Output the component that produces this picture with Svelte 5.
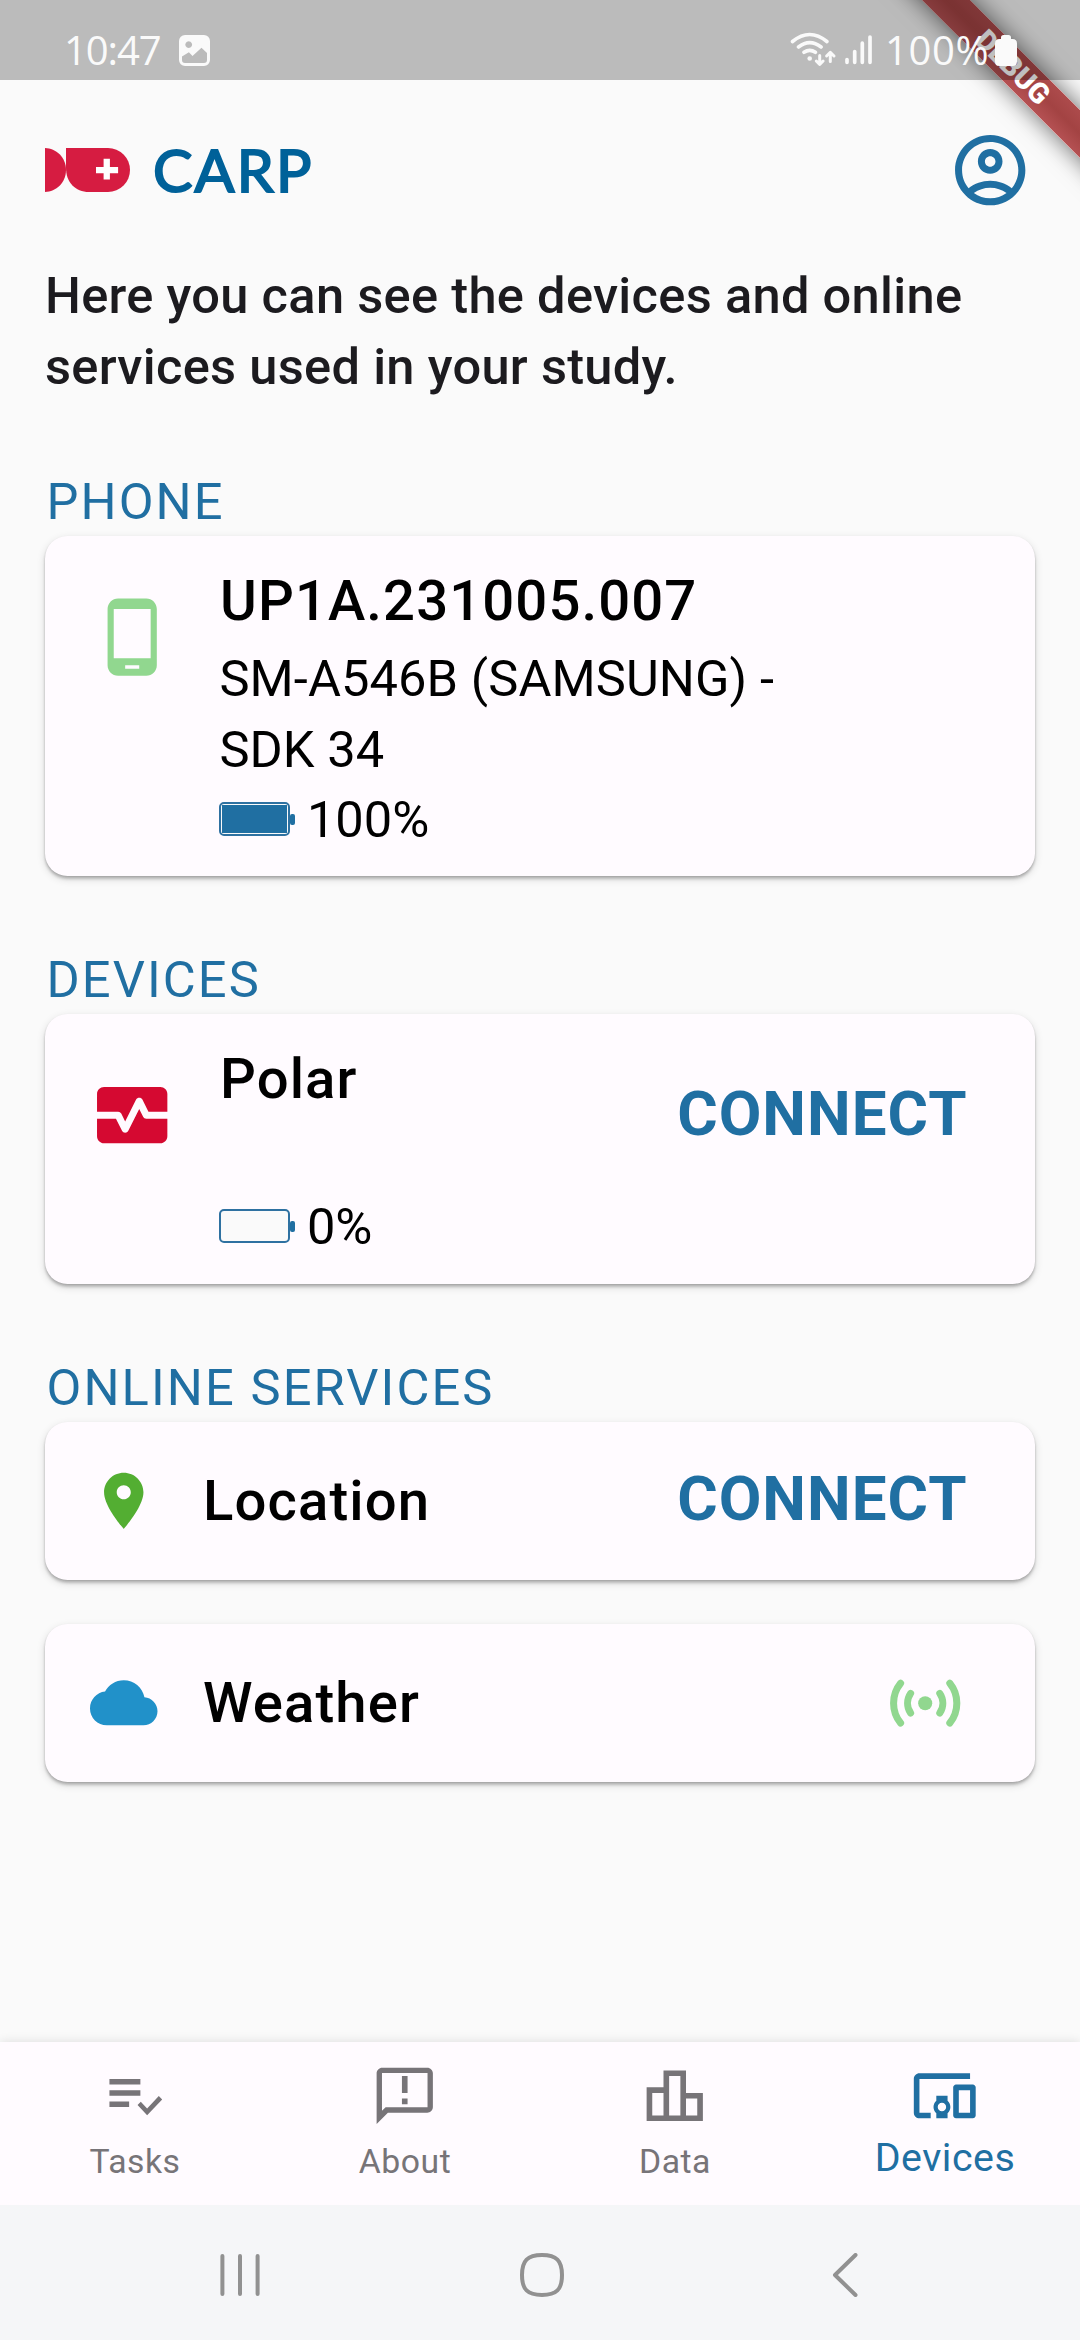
<script>
  const paths = {
    account:
      'M12 2C6.48 2 2 6.48 2 12s4.48 10 10 10 10-4.48 10-10S17.52 2 12 2zM7.35 18.5C8.66 17.56 10.26 17 12 17s3.34.56 4.65 1.5C15.34 19.44 13.74 20 12 20s-3.34-.56-4.65-1.5zm10.79-1.38C16.45 15.8 14.32 15 12 15s-4.45.8-6.14 2.12C4.7 15.73 4 13.95 4 12c0-4.42 3.58-8 8-8s8 3.58 8 8c0 1.95-.7 3.73-1.86 5.12zM12 6c-1.93 0-3.5 1.57-3.5 3.5S10.07 13 12 13s3.5-1.57 3.5-3.5S13.93 6 12 6zm0 5c-.83 0-1.5-.67-1.5-1.5S11.17 8 12 8s1.5.67 1.5 1.5S12.83 11 12 11z',
    phone:
      'M16 1H8C6.34 1 5 2.34 5 4v16c0 1.66 1.34 3 3 3h8c1.66 0 3-1.34 3-3V4c0-1.66-1.34-3-3-3zm-2 20h-4v-1h4v1zm3.25-3H6.75V4h10.5v14z',
    heart:
      'M15.11 12.45L14 10.24l-3.11 6.21c-.16.34-.51.55-.89.55s-.73-.21-.89-.55L7.38 13H2v5c0 1.1.9 2 2 2h16c1.1 0 2-.9 2-2v-5h-6c-.38 0-.73-.21-.89-.55zM20 4H4c-1.1 0-2 .9-2 2v5h6c.38 0 .73.21.89.55L10 13.76l3.11-6.21c.34-.68 1.45-.68 1.79 0L16.62 11H22V6c0-1.1-.9-2-2-2z',
    pin:
      'M12 2C8.13 2 5 5.13 5 9c0 5.25 7 13 7 13s7-7.75 7-13c0-3.87-3.13-7-7-7zm0 9.5c-1.38 0-2.5-1.12-2.5-2.5s1.12-2.5 2.5-2.5 2.5 1.12 2.5 2.5-1.12 2.5-2.5 2.5z',
    cloud:
      'M19.35 10.04C18.67 6.59 15.64 4 12 4 9.11 4 6.6 5.64 5.35 8.04 2.34 8.36 0 10.91 0 14c0 3.31 2.69 6 6 6h13c2.76 0 5-2.24 5-5 0-2.64-2.05-4.78-4.65-4.96z',
    tasks:
      'M14 10H3v2h11v-2zm0-4H3v2h11V6zM3 16h7v-2H3v2zM20.55 12.05l1.2 1.3-5.35 5.55-3.4-3.6 1.15-1.2 2.25 2.4z',
    about:
      'M20 2H4c-1.1 0-2 .9-2 2v18l4-4h14c1.1 0 2-.9 2-2V4c0-1.1-.9-2-2-2zm.1 14.1H5.2L3.9 17.3V3.9h16.2v12.2zM11 13h2v2h-2zm0-8h2v6h-2z',
    data: 'M16 11V3H8v6H2v12h20V11h-6zm-6-6h4v14h-4V5zm-6 6h4v8H4v-8zm16 8h-4v-6h4v6z',
    devices:
      'M3 6h18V4H3c-1.1 0-2 .9-2 2v12c0 1.1.9 2 2 2h4v-2H3V6zm10 6H9v1.78c-.61.55-1 1.33-1 2.22s.39 1.67 1 2.22V20h4v-1.78c.61-.55 1-1.34 1-2.22s-.39-1.67-1-2.22V12zm-2 5.5c-.83 0-1.5-.67-1.5-1.5s.67-1.5 1.5-1.5 1.5.67 1.5 1.5-.67 1.5-1.5 1.5zM22 8h-6c-.5 0-1 .5-1 1v10c0 .5.5 1 1 1h6c.5 0 1-.5 1-1V9c0-.5-.5-1-1-1zm-1 10h-4v-8h4v8z'
  };

  const hardware = [
    {
      heading: 'PHONE',
      icon: 'phone',
      tone: 'green',
      name: 'UP1A.231005.007',
      detail: 'SM-A546B (SAMSUNG) - SDK 34',
      battery: 100,
      connect: false
    },
    { heading: 'DEVICES', icon: 'heart', tone: 'red', name: 'Polar', detail: '', battery: 0, connect: true }
  ];

  const services = [
    { icon: 'pin', tone: 'leaf', name: 'Location', connected: false },
    { icon: 'cloud', tone: 'sky', name: 'Weather', connected: true }
  ];

  const tabs = [
    { icon: 'tasks', label: 'Tasks' },
    { icon: 'about', label: 'About' },
    { icon: 'data', label: 'Data' },
    { icon: 'devices', label: 'Devices', active: true }
  ];
</script>

{#snippet icon(name, cls)}
  <svg class="icon {cls}" viewBox="0 0 24 24" aria-hidden="true"><path fill-rule="evenodd" d={paths[name]} /></svg>
{/snippet}

<div class="screen">
  <div class="ribbon"><span>DEBUG</span></div>

  <div class="status">
    <span class="clock">10:47</span>
    <svg class="picture" viewBox="0 0 31 31" aria-hidden="true">
      <path
        fill="#fafafa"
        fill-rule="evenodd"
        d="M6 0h19a6 6 0 0 1 6 6v19a6 6 0 0 1-6 6H6a6 6 0 0 1-6-6V6a6 6 0 0 1 6-6zM9.7 6.2a3.4 3.4 0 1 0 .01 0zM3 21.5V25q0 3 3 3h19q3 0 3-3v-7l-5.5-5.3-9 8.3-3.6-3.8z"
      />
    </svg>
    <svg class="wifi" viewBox="790 30 84 40" aria-hidden="true">
      <g fill="none" stroke="#fafafa" stroke-width="3.6" stroke-linecap="round" stroke-linejoin="round">
        <path d="M792.5 41.5q17.2-14 34.4 0M798.5 47q11.2-8.6 22.6 0M804 52.3q5.7-4 11.4 0" />
        <path stroke-width="3" d="M819.7 55.5v8.7M816.3 61l3.4 3.500 3.400-3.500M830.300 61.500v-8.700M826.600 56l3.700-3.600 3.700 3.600" />
        <path stroke-width="3.7" d="M847 59.600v2.700M854.700 51.500v10.800M862.300 43.200v19.100M870 37v25.300" />
      </g>
      <circle cx="809.7" cy="58.5" r="2.3" fill="#fafafa" />
    </svg>
    <span class="charge">100%</span>
    <svg class="cell" viewBox="0 0 22 31" aria-hidden="true">
      <path fill="#fafafa" d="M6 4V2.500Q6 0 8.500 0h5Q16 0 16 2.500V4h1.500Q22 4 22 8.500v18Q22 31 17.500 31h-13Q0 31 0 26.500v-18Q0 4 4.500 4z" />
    </svg>
  </div>

  <header>
    <svg class="mark" viewBox="0 0 85 44" aria-hidden="true">
      <path fill="#d61c41" d="M0 0C11 .5 21 9 21 22S11 43.5 0 44z" />
      <path fill="#d61c41" d="M21 0h42a22 22 0 0 1 0 44H44C30 44 21 34 21 20z" />
      <path fill="#fff" d="M58.6 10.7h6.300V19h8.200v6.200h-8.200v6.200h-6.300v-6.200h-7.600V19h7.600z" />
    </svg>
    <span class="brand">CARP</span>
    {@render icon('account', 'large blue end')}
  </header>

  <main>
    <p class="intro">Here you can see the devices and online services used in your study.</p>

    {#each hardware as item}
      <section>
        <h2>{item.heading}</h2>
        <article class="card device">
          {@render icon(item.icon, 'large ' + item.tone)}
          <div class="info">
            <h3>{item.name}</h3>
            <p class="detail">{item.detail}</p>
            <div class="battery">
              <span class="gauge"><span class="fill" style="width: {item.battery}%"></span></span>
              <span class="tip"></span>
              <span class="percent">{item.battery}%</span>
            </div>
          </div>
          {#if item.connect}<button>CONNECT</button>{/if}
        </article>
      </section>
    {/each}

    <section>
      <h2>ONLINE SERVICES</h2>
      {#each services as item}
        <article class="card service">
          {@render icon(item.icon, 'small ' + item.tone)}
          <h3>{item.name}</h3>
          {#if item.connected}
            <svg class="icon large" viewBox="0 0 24 24" aria-hidden="true">
              <circle cx="12" cy="12" r="2" fill="#91d78f" />
              <path
                fill="none"
                stroke="#91d78f"
                stroke-width="2"
                stroke-linecap="round"
                d="M5 6.350a9 9 0 0 0 0 11.300M19 6.350a9 9 0 0 1 0 11.300M7.850 9.200a5 5 0 0 0 0 5.600M16.150 9.200a5 5 0 0 1 0 5.600"
              />
            </svg>
          {:else}
            <button>CONNECT</button>
          {/if}
        </article>
      {/each}
    </section>
  </main>

  <nav class="tabs">
    {#each tabs as tab}
      <div class="tab" class:active={tab.active}>
        {@render icon(tab.icon, 'small')}
        <span>{tab.label}</span>
      </div>
    {/each}
  </nav>

  <div class="system">
    <svg viewBox="0 0 44 44" aria-hidden="true"><path d="M4.4 3v38M22 3v38M39.600 3v38" /></svg>
    <svg viewBox="0 0 44 44" aria-hidden="true"><path d="M22 2C36.500 2 42 7.500 42 22S36.500 42 22 42 2 36.500 2 22 7.500 2 22 2z" /></svg>
    <svg viewBox="0 0 44 44" aria-hidden="true"><path d="M33.500 2L13 22l20.500 20" /></svg>
  </div>
</div>

<style>
  :global(body) {
    margin: 0;
    background: #fafafa;
  }

  .screen {
    position: relative;
    display: flex;
    flex-direction: column;
    width: 1080px;
    height: 2340px;
    overflow: hidden;
    background: #fafafa;
    font-family: Roboto, 'Liberation Sans', sans-serif;
    color: #000;
  }

  svg {
    display: block;
    flex: none;
  }

  h2,
  h3,
  p {
    margin: 0;
  }

  .ribbon {
    position: absolute;
    z-index: 1;
    left: 863px;
    top: 50px;
    width: 300px;
    height: 34px;
    display: flex;
    align-items: center;
    justify-content: center;
    transform: rotate(45deg);
    background: linear-gradient(#ad4b4c, #a34343 50%, #b55153);
    box-shadow: 0 0 24px rgba(0, 0, 0, 0.6);
    color: #fff;
    font-size: 28.7px;
    font-weight: 900;
    line-height: 34px;
  }

  .status {
    position: relative;
    z-index: 2;
    flex: none;
    box-sizing: border-box;
    display: flex;
    align-items: center;
    height: 80px;
    padding: 20px 63.5px 0 64px;
    background: rgba(0, 0, 0, 0.25);
    color: #fafafa;
    font-family: 'Open Sans', 'Noto Sans', sans-serif;
    font-size: 40px;
    line-height: 60px;
  }

  .clock {
    width: 115px;
    letter-spacing: -1.1px;
  }

  .picture {
    width: 31px;
    height: 31px;
  }

  .wifi {
    width: 84px;
    height: 40px;
    margin-left: auto;
  }

  .charge {
    margin-left: 11px;
    width: 109.5px;
    letter-spacing: 0.6px;
    white-space: nowrap;
  }

  .cell {
    width: 22px;
    height: 31px;
  }

  header {
    flex: none;
    box-sizing: border-box;
    display: flex;
    align-items: center;
    height: 180px;
    padding: 0 48px 0 45px;
  }

  .mark {
    width: 85px;
    height: 44px;
  }

  .brand {
    margin-left: 23px;
    font-family: Lato, sans-serif;
    font-size: 59px;
    font-weight: 400;
    line-height: 70px;
    letter-spacing: 2.2px;
    color: #006199;
    -webkit-text-stroke: 2px #006199;
  }

  .end {
    margin-left: auto;
  }

  .icon {
    fill: currentColor;
  }

  .large {
    width: 84.4px;
    height: 84.4px;
  }

  .small {
    width: 67.5px;
    height: 67.5px;
  }

  .blue {
    color: #206fa2;
  }

  .green {
    color: #91d78f;
  }

  .red {
    color: #d50931;
  }

  .leaf {
    color: #53ae32;
  }

  .sky {
    color: #2191c9;
  }

  main {
    flex: 1;
    min-height: 0;
    padding: 0 45px;
  }

  .intro {
    margin-bottom: 67px;
    font-size: 50.6px;
    font-weight: 500;
    line-height: 71px;
    letter-spacing: 0.3px;
    color: #1c1b1f;
  }

  section {
    margin-bottom: 71px;
  }

  h2 {
    padding: 0 1.5px 2px;
    font-size: 50.6px;
    font-weight: 400;
    line-height: 65px;
    letter-spacing: 2.1px;
    color: #206fa2;
  }

  .card {
    box-sizing: border-box;
    display: flex;
    padding: 0 67.5px 0 45px;
    border-radius: 22.5px;
    background: #fffbff;
    box-shadow:
      0 3px 3px rgba(0, 0, 0, 0.19),
      0 3px 9px rgba(0, 0, 0, 0.14),
      0 1px 2px rgba(0, 0, 0, 0.1);
  }

  .card > .icon:first-child {
    margin-right: 45px;
  }

  .device {
    min-height: 270px;
    padding-top: 32px;
    padding-bottom: 22px;
  }

  .device > .icon {
    margin-top: 26.8px;
  }

  .info {
    width: 600px;
  }

  .device button {
    margin: 31px 0 0 auto;
  }

  .device .info:not(:last-child) {
    width: 400px;
  }

  h3 {
    padding-left: 0.6px;
    font-size: 56.25px;
    font-weight: 500;
    line-height: 66px;
    letter-spacing: 1.1px;
  }

  .detail {
    min-height: 71px;
    margin-top: 9px;
    font-size: 50.6px;
    line-height: 71px;
    letter-spacing: 0.1px;
  }

  .battery {
    display: flex;
    align-items: center;
    height: 69px;
    font-size: 50.6px;
    line-height: 69px;
  }

  .gauge {
    box-sizing: border-box;
    width: 70.5px;
    height: 34px;
    margin-top: -1px;
    padding: 1px;
    border: 2.5px solid #2e71a1;
    border-radius: 5px;
    background: #fafafa;
  }

  .fill {
    display: block;
    height: 100%;
    background: #206fa2;
  }

  .tip {
    width: 5px;
    height: 11px;
    margin-top: -1px;
    border-radius: 2px;
    background: #206fa2;
  }

  .percent {
    margin-left: 12px;
  }

  button {
    flex: none;
    height: 74px;
    padding: 0;
    border: 0;
    background: none;
    font: 700 61.9px/74px Roboto, 'Liberation Sans', sans-serif;
    letter-spacing: 1px;
    color: #206fa2;
  }

  .service {
    align-items: center;
    height: 157.5px;
  }

  .service + .service {
    margin-top: 44.5px;
  }

  .service > :last-child {
    margin-left: auto;
  }

  .service button {
    margin-bottom: 4px;
  }

  .tabs {
    flex: none;
    display: grid;
    grid-template-columns: repeat(4, 1fr);
    height: 163px;
    background: #fffbff;
    box-shadow: 0 0 10px rgba(0, 0, 0, 0.12);
  }

  .tab {
    display: flex;
    flex-direction: column;
    align-items: center;
    padding-top: 19.5px;
    color: #777478;
    font-size: 33.75px;
    line-height: 44px;
    letter-spacing: 0.5px;
  }

  .tab span {
    margin-top: 10.5px;
  }

  .tab.active {
    color: #206fa2;
    font-size: 39.4px;
  }

  .tab.active span {
    margin-top: 6.5px;
  }

  .system {
    flex: none;
    box-sizing: border-box;
    display: flex;
    align-items: center;
    justify-content: space-between;
    height: 135px;
    padding: 5px 214px 0 218px;
    background: #f5f6f8;
  }

  .system svg {
    width: 44px;
    height: 44px;
    fill: none;
    stroke: #919191;
    stroke-width: 4;
    stroke-linecap: round;
    stroke-linejoin: round;
  }
</style>
